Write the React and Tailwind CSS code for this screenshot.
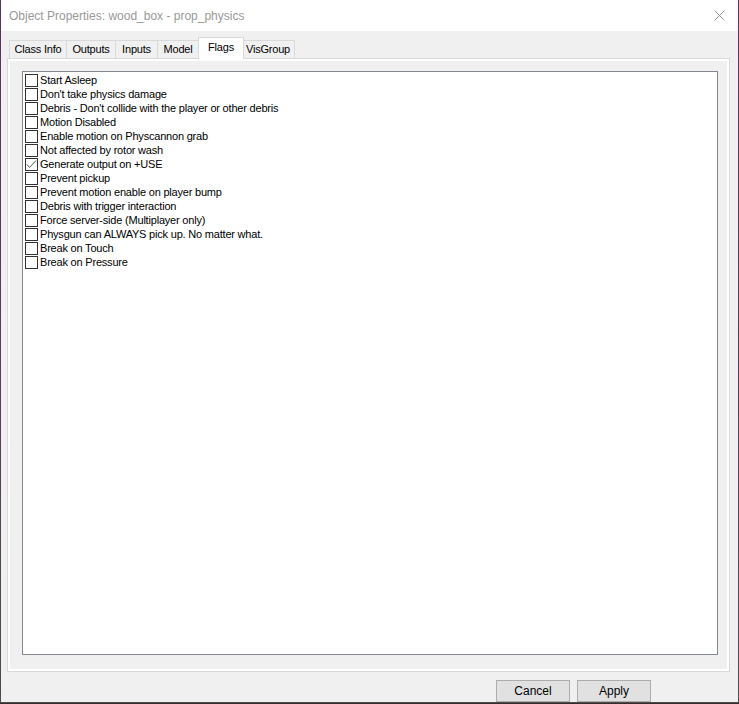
import React, { useState } from 'react';

const TABS = [
  { label: 'Class Info', w: 'w-[58px]' },
  { label: 'Outputs', w: 'w-[50px]' },
  { label: 'Inputs', w: 'w-[43px]' },
  { label: 'Model', w: 'w-[42px]' },
  { label: 'Flags', w: 'w-[46px]' },
  { label: 'VisGroup', w: 'w-[54px]' },
];

const FLAGS = [
  { label: 'Start Asleep', on: false },
  { label: "Don't take physics damage", on: false },
  { label: "Debris - Don't collide with the player or other debris", on: false },
  { label: 'Motion Disabled', on: false },
  { label: 'Enable motion on Physcannon grab', on: false },
  { label: 'Not affected by rotor wash', on: false },
  { label: 'Generate output on +USE', on: true },
  { label: 'Prevent pickup', on: false },
  { label: 'Prevent motion enable on player bump', on: false },
  { label: 'Debris with trigger interaction', on: false },
  { label: 'Force server-side (Multiplayer only)', on: false },
  { label: 'Physgun can ALWAYS pick up. No matter what.', on: false },
  { label: 'Break on Touch', on: false },
  { label: 'Break on Pressure', on: false },
];

const uiFont = { fontFamily: '"Liberation Sans", Arial, sans-serif' };

const CheckBox = ({ checked, onToggle }) => (
  <button
    type="button"
    onClick={onToggle}
    className="w-[13px] h-[13px] shrink-0 border border-[#333333] bg-white flex items-center justify-center p-0"
  >
    {checked && (
      <svg width="11" height="11" viewBox="0 0 11 11">
        <polyline points="1,5.5 3.5,8.5 10,1.5" fill="none" stroke="#5a5a5a" strokeWidth="1" />
      </svg>
    )}
  </button>
);

const App = () => {
  const [activeTab, setActiveTab] = useState('Flags');
  const [flags, setFlags] = useState(FLAGS.map((f) => f.on));

  const toggle = (i) => setFlags((prev) => prev.map((v, j) => (j === i ? !v : v)));

  return (
    <div className="w-[739px] h-[704px] bg-[#3a2c2a] overflow-hidden" style={uiFont}>
      {/* window frame: accent border fades toward the bottom */}
      <div className="w-[739px] h-[703px] bg-linear-to-b from-[#5e2f62] via-[#5a3a5e] to-[#4c4c4c] px-px pb-px">
        <div className="h-full flex flex-col bg-[#f0f0f0]">
          {/* title bar */}
          <div className="h-[31px] bg-white flex items-center justify-between pl-[8px] pr-[9px] shrink-0">
            <span className="text-[12px] text-[#999999]">
              Object Properties: wood_box - prop_physics
            </span>
            <svg width="11" height="11" viewBox="0 0 11 11" className="mr-[4px]">
              <path d="M0.5 0.5 L10.5 10.5 M10.5 0.5 L0.5 10.5" stroke="#9a9a9a" strokeWidth="1" />
            </svg>
          </div>

          {/* body */}
          <div className="flex-1 flex flex-col pl-[6px] pr-[8px] pt-[7px] text-[11px] tracking-[-0.2px] text-black">
            <div className="flex items-end h-[20px] pl-[2px] relative z-10">
              {TABS.map((t, i) => {
                const sel = t.label === activeTab;
                return (
                  <button
                    key={t.label}
                    type="button"
                    onClick={() => setActiveTab(t.label)}
                    className={
                      (sel
                        ? 'h-[22px] bg-white -mb-px -mx-[2px] pb-[3px] relative z-10 '
                        : 'h-[18px] bg-[#f0f0f0] ') +
                      (i > 0 ? '-ml-px ' : '') +
                      t.w +
                      ' border border-b-0 border-[#d9d9d9] flex items-center justify-center leading-none'
                    }
                  >
                    {t.label}
                  </button>
                );
              })}
            </div>

            {/* tab page */}
            <div className="h-[614px] border border-[#d9d9d9] bg-white p-[2px]">
              <div className="h-full bg-[#f0f0f0] pl-[12px] pr-[9px] pt-[10px] pb-[14px]">
                <div className="h-full border border-[#828790] bg-white pl-[2px] pt-px">
                  {FLAGS.map((f, i) => (
                    <label key={f.label} className="h-[14px] flex items-center gap-[2px] cursor-default">
                      <CheckBox checked={flags[i]} onToggle={() => toggle(i)} />
                      <span className="leading-none whitespace-nowrap">{f.label}</span>
                    </label>
                  ))}
                </div>
              </div>
            </div>

            {/* dialog buttons */}
            <div className="flex justify-end gap-[7px] pr-[79px] pt-[8px]">
              <button
                type="button"
                className="w-[74px] h-[22px] bg-[#e1e1e1] border border-[#adadad] text-[12px] tracking-normal"
              >
                Cancel
              </button>
              <button
                type="button"
                className="w-[74px] h-[22px] bg-[#e1e1e1] border border-[#adadad] text-[12px] tracking-normal"
              >
                Apply
              </button>
            </div>
          </div>
        </div>
      </div>
    </div>
  );
};

export default App;
